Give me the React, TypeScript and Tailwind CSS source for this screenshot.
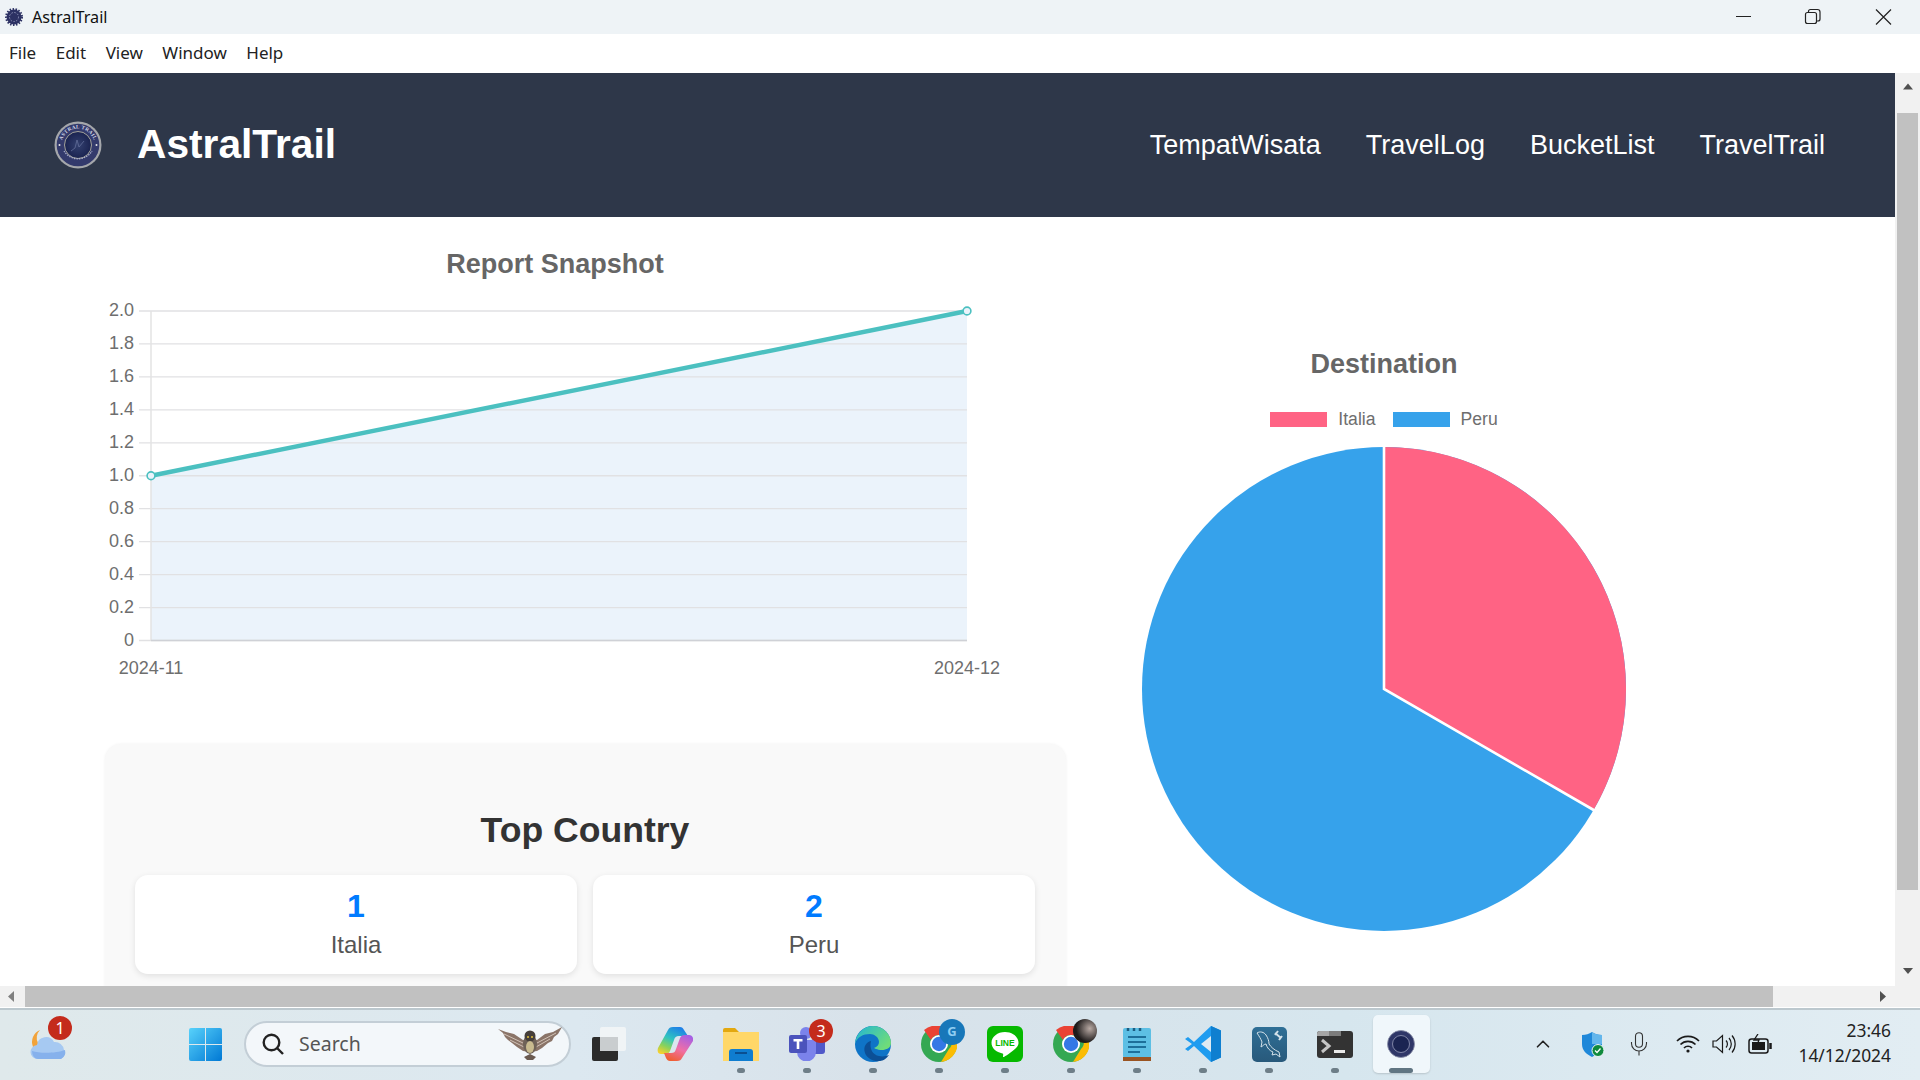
import { ChevronUp } from "lucide-react";

const Y_TICKS = ["2.0", "1.8", "1.6", "1.4", "1.2", "1.0", "0.8", "0.6", "0.4", "0.2", "0"];
const CHART = { left: 151, right: 967, top: 311, bottom: 640.5 };
const UI_FONT = "font-['Noto_Sans',sans-serif]";

function AppLogo({ size }: { size: number }) {
  return (
    <svg width={size} height={size} viewBox="0 0 48 48">
      <defs>
        <path id="logo-arc" d="M7.500 24a16.500 16.500 0 0 1 33 0" />
        <radialGradient id="logo-sky">
          <stop offset="0" stopColor="#33406f" />
          <stop offset="1" stopColor="#1a2350" />
        </radialGradient>
      </defs>
      <circle cx="24" cy="24" r="23.500" fill="#a5a7ab" />
      <circle cx="24" cy="24" r="21.300" fill="#333a6c" />
      <circle cx="24" cy="24" r="13.500" fill="url(#logo-sky)" stroke="#d8d4b4" strokeWidth="0.7" />
      <text fontSize="5.200" fontWeight="700" fill="#d5d8e8" letterSpacing="0.3" fontFamily="Liberation Serif, serif">
        <textPath href="#logo-arc" startOffset="50%" textAnchor="middle">
          ASTRAL TRAIL
        </textPath>
      </text>
      <path d="M10 30a16.500 16.500 0 0 0 28 0" fill="none" stroke="#a7acc8" strokeWidth="1.300" strokeDasharray="1.500 1" />
      <path d="M17 30l4-3 2-8 2 7 5-6" fill="none" stroke="#6a75a0" strokeWidth="0.7" />
      <circle cx="5.500" cy="24" r="1" fill="#e6e6e6" />
      <circle cx="42.500" cy="24" r="1" fill="#e6e6e6" />
    </svg>
  );
}

function TitleBar() {
  return (
    <div className={`flex h-[34px] shrink-0 items-center bg-[#eef3f6] ${UI_FONT}`}>
      <svg width="18" height="18" viewBox="0 0 18 18" className="ml-[5px]">
        <circle cx="9" cy="9" r="7.500" fill="#2c3163" />
        <circle cx="9" cy="9" r="8" fill="none" stroke="#2c3163" strokeWidth="2" strokeDasharray="1.500 1.500" />
        <circle cx="9" cy="9" r="4.500" fill="none" stroke="#8d92b6" strokeWidth="1" strokeDasharray="1.500 1.500" />
      </svg>
      <span className="ml-[9px] text-[16.200px] text-[#111]">AstralTrail</span>
      <div className="mr-[10px] ml-auto flex items-center">
        <svg width="70" height="34" viewBox="0 0 70 34">
          <path d="M36 16.500h15" stroke="#222" strokeWidth="1" />
        </svg>
        <svg width="70" height="34" viewBox="0 0 70 34">
          <rect x="35.500" y="12.500" width="11" height="11" rx="2" fill="none" stroke="#222" strokeWidth="1.200" />
          <path d="M38.500 12.500v-1a2 2 0 0 1 2-2h7a2.500 2.500 0 0 1 2.500 2.500v7a2 2 0 0 1-2 2h-1" fill="none" stroke="#222" strokeWidth="1.200" />
        </svg>
        <svg width="70" height="34" viewBox="0 0 70 34">
          <path d="M36 9.500l15 15M51 9.500l-15 15" stroke="#222" strokeWidth="1.200" />
        </svg>
      </div>
    </div>
  );
}

function MenuBar() {
  return (
    <div className={`flex h-[39px] shrink-0 items-center gap-[19.500px] bg-white pb-[1px] pl-[9px] text-[17px] text-[#222] ${UI_FONT}`}>
      {["File", "Edit", "View", "Window", "Help"].map((m) => (
        <span key={m}>{m}</span>
      ))}
    </div>
  );
}

function Header() {
  return (
    <header className="flex h-[144px] shrink-0 items-center bg-[#2e3749] pl-[54px] pr-[70px] font-['Liberation_Sans',sans-serif] text-white">
      <AppLogo size={48} />
      <h1 className="ml-[35px] text-[40.700px] font-bold">AstralTrail</h1>
      <nav className="ml-auto flex gap-[45px] text-[27px]">
        {["TempatWisata", "TravelLog", "BucketList", "TravelTrail"].map((n) => (
          <span key={n}>{n}</span>
        ))}
      </nav>
    </header>
  );
}

function LineChart() {
  const { left, right, top, bottom } = CHART;
  const step = (bottom - top) / 10;
  const midY = (top + bottom) / 2;
  return (
    <svg width="910" height="430" viewBox="100 290 910 430" className="block">
      <path d={`M${left} ${midY}L${right} ${top}V${bottom}H${left}Z`} fill="#ebf3fb" />
      {Y_TICKS.map((t, i) => {
        const y = top + i * step;
        return (
          <g key={t}>
            <line x1="139" x2={right} y1={y} y2={y} stroke="#e1e1e3" strokeWidth="1.300" />
            <text x="134" y={y + 5} textAnchor="end" fontSize="18" fill="#6e6e6e">
              {t}
            </text>
          </g>
        );
      })}
      <line x1={left} x2={left} y1={top} y2={bottom} stroke="#e3e3e3" strokeWidth="1.500" />
      <line x1={left} x2={right} y1={bottom} y2={bottom} stroke="#cfd1d6" strokeWidth="1.500" />
      <line x1={left} x2={right} y1={midY} y2={top} stroke="#4bc0c0" strokeWidth="4.400" />
      <circle cx={left} cy={midY} r="3.900" fill="#ebf3fb" stroke="#4bc0c0" strokeWidth="1.600" />
      <circle cx={right} cy={top} r="3.900" fill="#ebf3fb" stroke="#4bc0c0" strokeWidth="1.600" />
      <text x={left} y="674" textAnchor="middle" fontSize="18" fill="#6e6e6e">
        2024-11
      </text>
      <text x={right} y="674" textAnchor="middle" fontSize="18" fill="#6e6e6e">
        2024-12
      </text>
    </svg>
  );
}

function CountryCard({ rank, name }: { rank: number; name: string }) {
  return (
    <div className="flex h-[99px] flex-col items-center rounded-[13px] bg-white pt-[12px] shadow-[0_2px_6px_rgba(0,0,0,0.1)]">
      <span className="text-[32px] leading-[38px] font-bold text-[#007bff]">{rank}</span>
      <span className="mt-[2px] text-[24px] leading-[36px] text-[#555]">{name}</span>
    </div>
  );
}

function LeftColumn() {
  return (
    <div>
      <h2 className="mx-[100px] mt-[31px] w-[910px] text-center text-[27px] leading-[32px] font-bold text-[#666]">
        Report Snapshot
      </h2>
      <div className="mt-[10px] ml-[100px]">
        <LineChart />
      </div>
      <section className="mt-[24px] ml-[105px] h-[300px] w-[961px] rounded-[16px] bg-[#f9f9f9] pt-[64px] pr-[31px] pl-[30px] shadow-[0_0_3px_rgba(0,0,0,0.06)]">
        <h3 className="text-center text-[35.600px] leading-[44px] font-bold text-[#333]">Top Country</h3>
        <div className="mt-[23px] grid grid-cols-2 gap-[16px]">
          <CountryCard rank={1} name="Italia" />
          <CountryCard rank={2} name="Peru" />
        </div>
      </section>
    </div>
  );
}

function RightColumn() {
  return (
    <div className="flex flex-col items-center pt-[131px]">
      <h2 className="text-[27px] leading-[32px] font-bold text-[#666]">Destination</h2>
      <div className="mt-[29px] flex h-[20px] items-center text-[17.600px] text-[#6e6e6e]">
        <span className="h-[15px] w-[57px] bg-[#ff6384]" />
        <span className="ml-[11px]">Italia</span>
        <span className="ml-[17px] h-[15px] w-[57px] bg-[#36a2eb]" />
        <span className="ml-[11px]">Peru</span>
      </div>
      <svg width="490" height="490" viewBox="-245 -245 490 490" className="mt-[15px]">
        <circle r="242" fill="#36a2eb" />
        <path d="M0 0V-242A242 242 0 0 1 209.600 121Z" fill="#ff6384" />
        <path d="M0 -243V0L210.500 121.500" fill="none" stroke="#fff" strokeWidth="2.600" />
      </svg>
    </div>
  );
}

function VScrollbar() {
  return (
    <div className="flex w-[25px] shrink-0 flex-col items-center bg-[#f1f1f1]">
      <svg width="12" height="40" viewBox="0 0 12 40" className="shrink-0">
        <path d="M1 16.500L6 10.500l5 6z" fill="#505050" />
      </svg>
      <div className="h-[777px] w-[21px] shrink-0 bg-[#c1c1c1]" />
      <svg width="12" height="96" viewBox="0 0 12 96" className="shrink-0">
        <path d="M1 78l5 6 5-6z" fill="#505050" />
      </svg>
    </div>
  );
}

function HScrollbar() {
  return (
    <div className="flex h-[21px] shrink-0 items-center bg-[#f1f1f1]">
      <svg width="25" height="21" viewBox="0 0 25 21" className="shrink-0">
        <path d="M14 5l-6 5.500 6 5.500z" fill="#808080" />
      </svg>
      <div className="h-[21px] w-[1748px] shrink-0 bg-[#c1c1c1]" />
      <svg width="122" height="21" viewBox="0 0 122 21" className="shrink-0">
        <path d="M107 5l6 5.500-6 5.500z" fill="#505050" />
      </svg>
    </div>
  );
}

function WeatherIcon() {
  return (
    <svg width="42" height="44" viewBox="0 0 42 44">
      <path d="M13 8a11 11 0 0 0-2 13 11 11 0 0 0 7 5l-12-1a13 13 0 0 1 7-17z" fill="#f2a33a" />
      <path d="M11 37a7 7 0 0 1-1-14 9 9 0 0 1 17-3 9 9 0 0 1 10 8 8 8 0 0 1-3 9z" fill="#a6c9f2" />
      <path d="M5 29a6 8 0 0 0 6 8h23a8 8 0 0 0 4-9c-8 3-24 4-33 1z" fill="#86b1ec" />
    </svg>
  );
}

function StartIcon() {
  return (
    <svg width="35" height="35" viewBox="0 0 35 35">
      <defs>
        <linearGradient id="st" x1="0" y1="0" x2="1" y2="1">
          <stop offset="0" stopColor="#58d2fb" />
          <stop offset="1" stopColor="#0078d4" />
        </linearGradient>
      </defs>
      <path d="M1 3a2 2 0 0 1 2-2h14v16H1zM18 1h14a2 2 0 0 1 2 2v14H18zM1 18h16v16H3a2 2 0 0 1-2-2zM18 18h16v14a2 2 0 0 1-2 2H18z" fill="url(#st)" />
    </svg>
  );
}

function OwlIcon() {
  return (
    <svg width="64" height="34" viewBox="0 0 64 34">
      <path d="M0 2l8 3 8 2 9 6 7 1 7-1 8-6 8-2 9-5-4 7-4 3-2 4-4 2-6 5-5 3-7 1-7-1-6-4-5-4-4-3-3-3-2-4z" fill="#8a7468" />
      <path d="M6 7l19 9M58 6l-19 10M12 13l14 7M52 12l-14 8" stroke="#d1c2b6" strokeWidth="1" />
      <ellipse cx="32" cy="17" rx="7" ry="10" fill="#6f6258" />
      <circle cx="32" cy="9" r="5.500" fill="#453f3a" />
      <ellipse cx="32" cy="20" rx="4" ry="6" fill="#c9bb8f" />
      <circle cx="30" cy="10" r="1" fill="#e2c23b" />
      <circle cx="34" cy="10" r="1" fill="#e2c23b" />
      <path d="M26 30l6-3 6 3-3 3h-6z" fill="#6a5a50" />
    </svg>
  );
}

function SearchBox() {
  return (
    <div className={`ml-[6px] flex h-[46px] w-[327px] shrink-0 items-center rounded-full border-2 border-[#c3ced6] bg-[#f3f7fa] pl-[15px] ${UI_FONT}`}>
      <svg width="24" height="24" viewBox="0 0 24 24" fill="none" stroke="#222" strokeWidth="2.400">
        <circle cx="10.500" cy="10.500" r="7.800" />
        <path d="M16 16l6 6" />
      </svg>
      <span className="ml-[14px] text-[19.500px] text-[#555]">Search</span>
      <div className="mr-[7px] ml-auto">
        <OwlIcon />
      </div>
    </div>
  );
}

function TaskViewIcon() {
  return (
    <svg width="36" height="36" viewBox="0 0 36 36">
      <rect x="1" y="11" width="26" height="24" rx="2" fill="#2b2b2b" />
      <rect x="9" y="1" width="26" height="24" rx="2" fill="#f2f5f6" opacity="0.9" />
      <rect x="9" y="11" width="18" height="14" fill="#c9cdcf" />
    </svg>
  );
}

function CopilotIcon() {
  return (
    <svg width="36" height="34" viewBox="0 0 36 34">
      <defs>
        <linearGradient id="cp1" x1="0.700" y1="0" x2="0.200" y2="1">
          <stop offset="0" stopColor="#1f7fe8" />
          <stop offset="0.45" stopColor="#2fc3c0" />
          <stop offset="0.75" stopColor="#8ad25a" />
          <stop offset="1" stopColor="#f4d02f" />
        </linearGradient>
        <linearGradient id="cp2" x1="0.800" y1="0" x2="0.300" y2="1">
          <stop offset="0" stopColor="#a45fe6" />
          <stop offset="0.55" stopColor="#f06fa5" />
          <stop offset="1" stopColor="#ef5f32" />
        </linearGradient>
      </defs>
      <path d="M11 3c1-2 2-3 5-3h7c2 0 3 1 4 3l4 6H22c-3 0-4 1-5 4l-4 11c-1 2-2 3-5 3H4c-3 0-4-3-3-6z" fill="url(#cp1)" />
      <path d="M25 31c-1 2-2 3-5 3h-7c-2 0-3-1-4-3l-2-5h7c3 0 4-1 5-4l4-11c1-2 2-3 5-3h4c3 0 5 3 4 6z" fill="url(#cp2)" />
    </svg>
  );
}

function FolderIcon() {
  return (
    <svg width="36" height="33" viewBox="0 0 36 33">
      <path d="M0 2a2 2 0 0 1 2-2h10l4 4h18a2 2 0 0 1 2 2v4H0z" fill="#e3a80f" />
      <rect y="4" width="36" height="29" fill="#ffd768" />
      <path d="M6 33V24a3 3 0 0 1 3-3h18a3 3 0 0 1 3 3v9z" fill="#0f7dd0" />
      <rect x="12" y="24" width="12" height="2" fill="#0a4f91" />
    </svg>
  );
}

function TeamsIcon() {
  return (
    <svg width="36" height="34" viewBox="0 0 36 34">
      <circle cx="27" cy="6" r="5" fill="#5059c9" />
      <rect x="22" y="12" width="14" height="15" rx="3" fill="#5059c9" />
      <circle cx="17" cy="6" r="6" fill="#7b83eb" />
      <path d="M8 13h19v12a9 9 0 0 1-19 0z" fill="#7b83eb" />
      <rect y="8" width="18" height="18" rx="2" fill="#4b53bc" />
      <path d="M4.500 12h9v2.400h-3.200V22H7.700v-7.600H4.500z" fill="#fff" />
    </svg>
  );
}

function EdgeIcon() {
  return (
    <svg width="36" height="36" viewBox="0 0 36 36">
      <defs>
        <linearGradient id="ed" x1="0" y1="0" x2="1" y2="0.600">
          <stop offset="0" stopColor="#20b5d6" />
          <stop offset="1" stopColor="#6fdc7a" />
        </linearGradient>
      </defs>
      <circle cx="18" cy="18" r="18" fill="#0f74c7" />
      <path d="M0 18C1 7 9 0 18 0c10 0 18 8 18 17 0 5-5 7-9 7-5 0-8-2-8-2 3-1 5-3 5-6 0-5-5-8-9-8C8 8 2 11 0 18z" fill="url(#ed)" />
      <path d="M16 15c-5 1-8 6-6 12 2 5 8 9 15 8 3 0 7-3 9-6-3 1-6 2-10 1-6-1-10-7-8-15z" fill="#0c4f96" />
    </svg>
  );
}

function ChromeBase() {
  return (
    <svg width="36" height="36" viewBox="0 0 36 36">
      <circle cx="18" cy="18" r="18" fill="#34a853" />
      <path d="M18 0a18 18 0 0 1 16 9H18a9 9 0 0 0-8 5L3 4A18 18 0 0 1 18 0z" fill="#ea4335" />
      <path d="M34 9a18 18 0 0 1-14 27l8-13a9 9 0 0 0-1-14z" fill="#fbbc04" />
      <circle cx="18" cy="18" r="9" fill="#fff" />
      <circle cx="18" cy="18" r="7.200" fill="#3478e5" />
    </svg>
  );
}

function ChromeProfile() {
  return (
    <div className="relative">
      <ChromeBase />
      <span className={`absolute top-[-7px] right-[-8px] flex h-[26px] w-[26px] items-center justify-center rounded-full bg-[#1877b9] text-[13px] font-bold text-[#8fcdf2] ${UI_FONT}`}>
        G
      </span>
    </div>
  );
}

function ChromePhoto() {
  return (
    <div className="relative">
      <ChromeBase />
      <span className="absolute top-[-7px] right-[-8px] h-[24px] w-[24px] rounded-full bg-[radial-gradient(circle_at_70%_40%,#b9aaa4,#1d1a1a_62%)]" />
    </div>
  );
}

function LineIcon() {
  return (
    <div className="flex h-[36px] w-[36px] items-center justify-center rounded-[6px] bg-[#06b900]">
      <svg width="30" height="30" viewBox="0 0 30 30">
        <path d="M15 3C7.500 3 1.500 7.800 1.500 13.800c0 5.300 4.700 9.700 11 10.600 1 .2.700 1.300.500 3 0 .6.500.8 1.300.3 2.200-1.400 10.200-6.500 13-10.300 1-1.300 1.200-2.300 1.200-3.600C28.500 7.800 22.500 3 15 3z" fill="#fff" />
        <text x="15" y="17" textAnchor="middle" fontSize="8.500" fontWeight="700" fill="#06b900" fontFamily="Liberation Sans, sans-serif">
          LINE
        </text>
      </svg>
    </div>
  );
}

function NotepadIcon() {
  return (
    <svg width="36" height="36" viewBox="0 0 36 36">
      <rect x="4" y="2" width="28" height="30" rx="2" fill="#5dbfe4" />
      <rect x="4" y="31" width="28" height="4" fill="#9a5422" />
      <path d="M9 2v3M15 2v3M21 2v3" stroke="#1c5c80" strokeWidth="2.500" />
      <path d="M9 11h18M9 16h18M9 21h18M9 26h12" stroke="#1d6f9a" strokeWidth="2" />
    </svg>
  );
}

function VsCodeIcon() {
  return (
    <svg width="36" height="36" viewBox="0 0 36 36">
      <path d="M26 0l10 4.500v27L26 36 9 20l-6 5-3-2 7-5-7-5 3-2 6 5z" fill="#1f9cf0" />
      <path d="M26 0l10 4.500v27L26 36z" fill="#0f7fd0" />
      <path d="M26 10l-10 8 10 8z" fill="#dfeaf2" />
    </svg>
  );
}

function MysqlIcon() {
  return (
    <div className="flex h-[35px] w-[35px] items-center justify-center rounded-[5px] bg-[linear-gradient(180deg,#2f6f96,#28597b)]">
      <svg width="33" height="33" viewBox="0 0 33 33" fill="none" stroke="#d4e2ea" strokeWidth="1">
        <path d="M4 5c3-2 7-1 9 2 2 3 3 6 3 9 2 3 5 6 10 8l1 5-4-3-4 1 1-3c-3-1-6-4-7-8-2 0-3 2-5 3l1-5c-1-3-3-6-5-9z" />
        <path d="M22 5l6 5M25 3l-3 4M29 8l-3 4" strokeWidth="2" />
      </svg>
    </div>
  );
}

function TerminalIcon() {
  return (
    <svg width="36" height="27" viewBox="0 0 36 27">
      <rect width="36" height="27" rx="3" fill="#333" />
      <path d="M0 3a3 3 0 0 1 3-3h9v5H0z" fill="#a5a5a5" />
      <rect x="12" y="0" width="12" height="5" fill="#7c7c7c" />
      <path d="M5 9l7 6-7 6" fill="none" stroke="#c4c4c4" strokeWidth="3" />
      <rect x="17" y="19" width="11" height="3" fill="#e9e9e9" />
    </svg>
  );
}

function TaskIcon({ children, dot }: { children: React.ReactNode; dot?: boolean }) {
  return (
    <div className="relative flex h-[68px] w-[66px] shrink-0 items-center justify-center">
      {children}
      {dot && <span className="absolute bottom-[5.500px] h-[5px] w-[8px] rounded-full bg-[#6e7e88]" />}
    </div>
  );
}

function Badge({ children }: { children: React.ReactNode }) {
  return (
    <span className={`absolute flex h-[24px] w-[24px] items-center justify-center rounded-full bg-[#c42b1c] text-[16px] text-white ${UI_FONT}`}>
      {children}
    </span>
  );
}

function Tray() {
  return (
    <div className="ml-auto flex h-[68px] items-center text-[#222]">
      <div className="flex w-[40px] justify-center">
        <ChevronUp size={22} strokeWidth={1.800} />
      </div>
      <div className="flex w-[60px] justify-center">
        <svg width="24" height="25" viewBox="0 0 24 25">
          <path d="M11 0c2.500 2 6 3 10 3v9c0 6-4 10-10 13C5 22 1 18 1 12V3c4 0 7-1 10-3z" fill="#1f88d9" />
          <path d="M11 0c2.500 2 6 3 10 3v9H11z" fill="#63b6ec" />
          <circle cx="17" cy="18.500" r="6" fill="#0f8a3c" stroke="#eaf3f6" strokeWidth="1" />
          <path d="M14 18.500l2 2 3.500-4" fill="none" stroke="#fff" strokeWidth="1.300" />
        </svg>
      </div>
      <div className="flex w-[32px] justify-center">
        <svg width="18" height="24" viewBox="0 0 18 24" fill="none" stroke="#333" strokeWidth="1.100">
          <rect x="5.500" y="0.700" width="7" height="14.500" rx="3.500" />
          <path d="M1.500 10v1.500a7.500 7.500 0 0 0 15 0V10M9 19v4.500" />
        </svg>
      </div>
      <div className="ml-[18px] flex w-[30px] justify-center">
        <svg width="24" height="18" viewBox="0 0 24 18" fill="none" stroke="#1a1a1a" strokeWidth="1.700">
          <path d="M1 6a15.500 15.500 0 0 1 22 0M4.500 9.500a10.500 10.500 0 0 1 15 0M8 13a5.500 5.500 0 0 1 8 0" />
          <circle cx="12" cy="16" r="1.600" fill="#1a1a1a" stroke="none" />
        </svg>
      </div>
      <div className="ml-[6px] flex w-[30px] justify-center">
        <svg width="24" height="20" viewBox="0 0 24 20" fill="none" stroke="#1a1a1a" strokeWidth="1.200">
          <path d="M1 7v6h3.500l6 5.500V1.500l-6 5.500zM14 6.500a5 5 0 0 1 0 7M17 4a9 9 0 0 1 0 12M20 1.500a13 13 0 0 1 0 17" />
        </svg>
      </div>
      <div className="ml-[6px] flex w-[30px] justify-center">
        <svg width="24" height="20" viewBox="0 0 24 20" fill="none" stroke="#1a1a1a" strokeWidth="1.500">
          <rect x="1" y="5" width="19" height="14" rx="2.500" />
          <rect x="4" y="8" width="13" height="8" fill="#1a1a1a" stroke="none" />
          <path d="M22.500 9v6" strokeWidth="2.500" />
          <path d="M10 0L6 6h5l-2 5" strokeWidth="1.300" />
        </svg>
      </div>
      <div className={`flex w-[116px] flex-col items-end pb-[2px] text-[17.400px] leading-[25px] text-[#222] ${UI_FONT}`}>
        <span>23:46</span>
        <span>14/12/2024</span>
      </div>
      <div className="w-[29px]" />
    </div>
  );
}

function Taskbar() {
  return (
    <div className="flex h-[72px] shrink-0 items-center border-t-[2px] border-[#bcc8ce] bg-[linear-gradient(90deg,#dfe9eb_0%,#dce8f0_30%,#d8e2ea_45%,#d6e6ee_70%,#e2edf3_100%)] pb-[2px]">
      <div className="relative ml-[27px] h-[44px] w-[42px] shrink-0">
        <WeatherIcon />
        <span className="absolute top-[-6px] left-[21px] flex h-[24px] w-[24px] items-center justify-center">
          <Badge>1</Badge>
        </span>
      </div>
      <div className="ml-[103px] flex w-[66px] shrink-0 justify-center">
        <StartIcon />
      </div>
      <SearchBox />
      <div className="ml-[5px] flex w-[66px] shrink-0 justify-center">
        <TaskViewIcon />
      </div>
      <TaskIcon>
        <CopilotIcon />
      </TaskIcon>
      <TaskIcon dot>
        <FolderIcon />
      </TaskIcon>
      <TaskIcon dot>
        <div className="relative">
          <TeamsIcon />
          <span className="absolute top-[-8px] right-[-8px] flex h-[24px] w-[24px] items-center justify-center">
            <Badge>3</Badge>
          </span>
        </div>
      </TaskIcon>
      <TaskIcon dot>
        <EdgeIcon />
      </TaskIcon>
      <TaskIcon dot>
        <ChromeProfile />
      </TaskIcon>
      <TaskIcon dot>
        <LineIcon />
      </TaskIcon>
      <TaskIcon dot>
        <ChromePhoto />
      </TaskIcon>
      <TaskIcon dot>
        <NotepadIcon />
      </TaskIcon>
      <TaskIcon dot>
        <VsCodeIcon />
      </TaskIcon>
      <TaskIcon dot>
        <MysqlIcon />
      </TaskIcon>
      <TaskIcon dot>
        <TerminalIcon />
      </TaskIcon>
      <div className="relative mx-[4.500px] flex h-[58px] w-[57px] shrink-0 items-center justify-center rounded-[5px] bg-[#f0f7fb] shadow-[0_1px_2px_rgba(0,0,0,0.15)]">
        <svg width="28" height="28" viewBox="0 0 28 28">
          <circle cx="14" cy="14" r="13.500" fill="#2f3768" stroke="#8c90a8" strokeWidth="0.800" />
          <circle cx="14" cy="14" r="8.500" fill="#1b2452" stroke="#a6abc6" strokeWidth="0.700" />
        </svg>
        <span className="absolute bottom-0 h-[5px] w-[24px] rounded-full bg-[#607582]" />
      </div>
      <Tray />
    </div>
  );
}

export default function App() {
  return (
    <div className="flex h-[1080px] w-[1920px] flex-col overflow-hidden bg-white font-['Liberation_Sans',sans-serif]">
      <TitleBar />
      <MenuBar />
      <div className="flex min-h-0 flex-1">
        <div className="flex min-w-0 flex-1 flex-col overflow-hidden">
          <Header />
          <main className="grid min-h-0 flex-1 grid-cols-[1066px_636px] overflow-hidden">
            <LeftColumn />
            <RightColumn />
          </main>
        </div>
        <VScrollbar />
      </div>
      <HScrollbar />
      <div className="h-[1px] shrink-0 bg-white" />
      <Taskbar />
    </div>
  );
}
